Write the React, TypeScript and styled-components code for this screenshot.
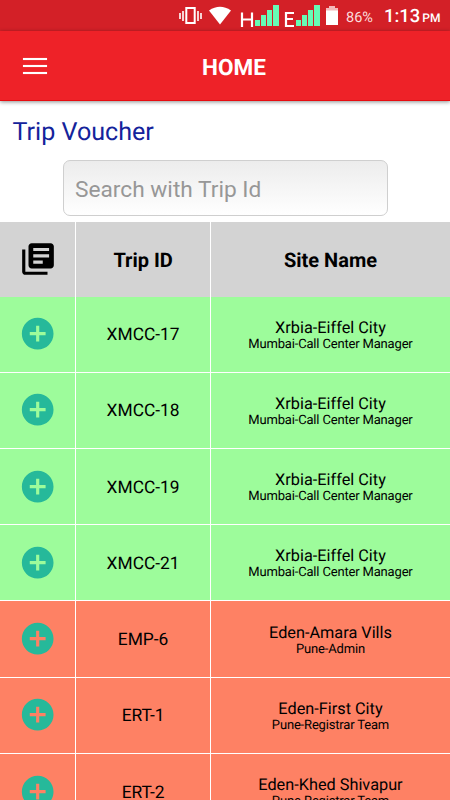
import React from "react";
import styled, { createGlobalStyle } from "styled-components";

const GlobalStyle = createGlobalStyle`
  * { box-sizing: border-box; }
  html, body { margin: 0; padding: 0; background: #fff; overflow: hidden; }
  body { font-family: Roboto, "Liberation Sans", sans-serif; color: #000; text-rendering: geometricPrecision; }
`;

const Screen = styled.main`
  width: 450px;
  height: 800px;
  overflow: hidden;
  background: #fff;
  display: flex;
  flex-direction: column;
`;

const StatusBar = styled.div`
  flex: none;
  height: 31px;
  background: #d32027;
  color: #fff;
  display: flex;
  align-items: center;
  padding-left: 179px;
`;

const StatusIcons = styled.svg`
  display: block;
  flex: none;
`;

const Battery = styled.span`
  margin-left: 6px;
  width: 28px;
  font-size: 14.5px;
  line-height: 31px;
  color: #fbdcdc;
  white-space: nowrap;
  padding-top: 3px;
`;

const Clock = styled.span`
  margin-left: 10px;
  font-size: 18.4px;
  line-height: 31px;
  font-weight: 500;
  white-space: nowrap;
  padding-top: 3px;
`;

const Meridiem = styled.small`
  font-size: 12px;
  margin-left: 2px;
`;

const AppBar = styled.header`
  flex: none;
  position: relative;
  height: 70px;
  background: #ee2228;
  border-bottom: 1px solid #e80b10;
  box-shadow: 0 1px 4px rgba(0, 0, 0, 0.45);
  display: grid;
  grid-template-columns: 68px 1fr 50px;
  align-items: center;
`;

const MenuButton = styled.button`
  border: 0;
  padding: 1px 0 0 23px;
  background: none;
  display: flex;
  flex-direction: column;
  gap: 5px;
`;

const MenuLine = styled.span`
  width: 24px;
  height: 2px;
  background: #fff;
  box-shadow: 0 0 1px rgba(255, 255, 255, 0.6);
`;

const Title = styled.h1`
  margin: 5px 0 0;
  text-align: center;
  font-size: 22.5px;
  line-height: 28px;
  font-weight: 700;
  color: #fff;
`;

const PageTitle = styled.h2`
  flex: none;
  margin: 0;
  height: 59px;
  padding: 16px 12.5px 0;
  font-size: 25.1px;
  line-height: 32px;
  font-weight: 400;
  color: #14239b;
`;

const SearchInput = styled.input`
  flex: none;
  margin: 0 62.5px 6px;
  width: 325px;
  height: 56px;
  border: 1.5px solid #cfcfcf;
  border-radius: 7px;
  background: linear-gradient(#ececec, #fff);
  padding: 2px 11.5px 0;
  font: 400 22.7px Roboto, sans-serif;
  outline: none;
  &::placeholder { color: #979797; opacity: 1; }
`;

const Table = styled.section`
  flex: none;
`;

const Row = styled.div<{ $color: string }>`
  display: grid;
  grid-template-columns: 76.2px 134.8px 239px;
  height: 76.24px;
  background: ${(p) => p.$color};
  border-bottom: 1.6px solid #fff;
`;

const HeaderRow = styled(Row)`
  height: 74.5px;
  border-bottom: 0;
  font-size: 20px;
  line-height: 24px;
  font-weight: 700;
`;

const Cell = styled.div`
  display: flex;
  flex-direction: column;
  align-items: center;
  justify-content: center;
  border-right: 1px solid #fff;
  white-space: nowrap;
  &:last-child { border-right: 0; }
`;

const Heading = styled.span`
  padding-top: 2px;
`;

const TripId = styled.span`
  font-size: 17.4px;
  line-height: 20px;
  padding-top: 2px;
`;

const Site = styled.span`
  font-size: 16.3px;
  line-height: 18px;
  padding-top: 2px;
`;

const Team = styled.span`
  font-size: 13px;
  line-height: 15px;
  letter-spacing: -0.17px;
`;

const RowIcon = styled.svg`
  display: block;
`;

const green = "#9dfc9b";
const coral = "#fe8164";

const trips = [
  { id: "XMCC-17", site: "Xrbia-Eiffel City", team: "Mumbai-Call Center Manager", color: green },
  { id: "XMCC-18", site: "Xrbia-Eiffel City", team: "Mumbai-Call Center Manager", color: green },
  { id: "XMCC-19", site: "Xrbia-Eiffel City", team: "Mumbai-Call Center Manager", color: green },
  { id: "XMCC-21", site: "Xrbia-Eiffel City", team: "Mumbai-Call Center Manager", color: green },
  { id: "EMP-6", site: "Eden-Amara Vills", team: "Pune-Admin", color: coral },
  { id: "ERT-1", site: "Eden-First City", team: "Pune-Registrar Team", color: coral },
  { id: "ERT-2", site: "Eden-Khed Shivapur", team: "Pune-Registrar Team", color: coral },
];

const DocumentsIcon = () => (
  <RowIcon width="38" height="38" viewBox="0 0 24 24">
    <path d="M4 6H2v14c0 1.1.9 2 2 2h14v-2H4V6zm16-4H8c-1.1 0-2 .9-2 2v12c0 1.1.9 2 2 2h12c1.1 0 2-.9 2-2V4c0-1.1-.9-2-2-2zm-1 9H9V9h10v2zm-4 4H9v-2h6v2zm4-8H9V5h10v2z" />
  </RowIcon>
);

const AddIcon = () => (
  <RowIcon width="38" height="38" viewBox="0.2 0.2 24 24" fill="#26b99a">
    <path d="M12 2C6.48 2 2 6.48 2 12s4.48 10 10 10 10-4.48 10-10S17.52 2 12 2zm5 11h-4v4h-2v-4H7v-2h4V7h2v4h4v2z" />
  </RowIcon>
);

export default function App() {
  return (
    <>
      <GlobalStyle />
      <Screen>
        <StatusBar>
          <StatusIcons width="161" height="31" viewBox="179 0 161 31">
            <g fill="none" stroke="#fff">
              <rect x="186.3" y="8" width="8.4" height="15" strokeWidth="2" />
              <path d="M183 11v10M198 11v10" strokeWidth="1.6" />
              <path d="M180 13v6M201 13v6" strokeWidth="1.6" />
            </g>
            <path d="M209 10.5Q220 3 231 10.5L220 24.5Z" fill="#fff" />
            <path d="M242 12.5V27M252 12.5V27M242 19.5H252" stroke="#fff" strokeWidth="2.2" fill="none" />
            <path d="M294 13H286V26H294M286 19H293" stroke="#fff" strokeWidth="2.2" fill="none" />
            <g fill="#66fcb5">
              <path d="M255 20h5v6h-5zM261 15h5v11h-5zM267 10h5v16h-5zM273 5h6v21h-6z" />
              <path d="M296 20h5v6h-5zM302 15h5v11h-5zM308 10h5v16h-5zM314 5h6v21h-6z" />
            </g>
            <path d="M329 6h6v3h-6zM326 8h12v3h-12z" fill="#f4b8ba" />
            <path d="M326 10.5h12V25h-12z" fill="#fff" />
          </StatusIcons>
          <Battery>86%</Battery>
          <Clock>1:13<Meridiem>PM</Meridiem></Clock>
        </StatusBar>
        <AppBar>
          <MenuButton aria-label="Menu">
            <MenuLine />
            <MenuLine />
            <MenuLine />
          </MenuButton>
          <Title>HOME</Title>
        </AppBar>
        <PageTitle>Trip Voucher</PageTitle>
        <SearchInput placeholder="Search with Trip Id" />
        <Table>
          <HeaderRow $color="#d3d3d3">
            <Cell><DocumentsIcon /></Cell>
            <Cell><Heading>Trip ID</Heading></Cell>
            <Cell><Heading>Site Name</Heading></Cell>
          </HeaderRow>
          {trips.map((trip) => (
            <Row key={trip.id} $color={trip.color}>
              <Cell><AddIcon /></Cell>
              <Cell><TripId>{trip.id}</TripId></Cell>
              <Cell>
                <Site>{trip.site}</Site>
                <Team>{trip.team}</Team>
              </Cell>
            </Row>
          ))}
        </Table>
      </Screen>
    </>
  );
}
